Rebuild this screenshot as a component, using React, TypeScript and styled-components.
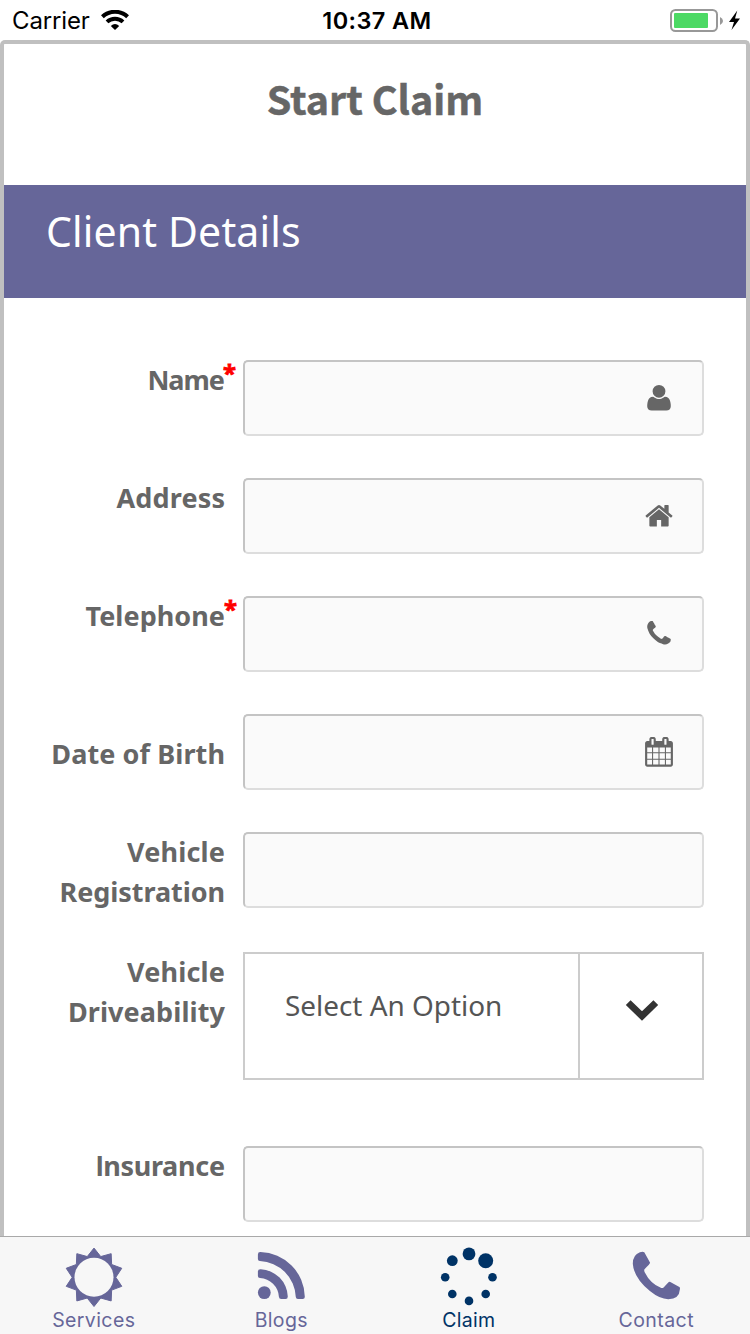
import React from "react";
import styled, { createGlobalStyle, css } from "styled-components";

const GlobalStyle = createGlobalStyle`
  * { box-sizing: border-box; }
  body { margin: 0; background: #fff; overflow: hidden; }
`;

const Screen = styled.div`
  width: 750px;
  height: 1334px;
  display: flex;
  flex-direction: column;
  overflow: hidden;
  background: #fff;
`;

const StatusBar = styled.header`
  flex: none;
  height: 40px;
  display: grid;
  grid-template-columns: 1fr auto 1fr;
  align-items: center;
  padding: 1px 9px 0 12px;
  font: 400 24px/39px Inter, "Liberation Sans", sans-serif;
  color: #000;
`;

const StatusLeft = styled.div`
  display: flex;
  align-items: center;
  gap: 11px;
`;

const StatusText = styled.span`
  letter-spacing: -0.15px;
`;

const Time = styled.span`
  padding-left: 1px;
  font-weight: 600;
  font-size: 23.5px;
  letter-spacing: 0.4px;
`;

const StatusRight = styled.div`
  display: flex;
  justify-content: flex-end;
`;

const Page = styled.main`
  flex: 1;
  min-height: 0;
  overflow: hidden;
  border: 4px solid #c0c0c0;
  border-bottom: 0;
  border-radius: 5px 5px 0 0;
`;

const Title = styled.h1`
  margin: 0;
  height: 141px;
  text-align: center;
  font: 700 39.4px/107px "Noto Sans CJK SC", sans-serif;
  -webkit-text-stroke: 0.5px #666;
  color: #666;
`;

const SectionHeading = styled.h2`
  margin: 0;
  height: 113px;
  padding-left: 42px;
  background: #666699;
  color: #fff;
  font: 400 41px/92px "Noto Sans", "Open Sans", sans-serif;
  letter-spacing: 0.15px;
`;

const Form = styled.form`
  padding: 62px 42px 0 28px;
`;

const Row = styled.div<{ $gap?: number }>`
  display: grid;
  grid-template-columns: 193px 461px;
  column-gap: 18px;
  margin-bottom: ${(p) => p.$gap ?? 42}px;
`;

const Label = styled.label<{ $offset?: number }>`
  padding-top: ${(p) => p.$offset ?? 0}px;
  height: 76px;
  text-align: right;
  font: 700 27px/40px "Noto Sans", "Open Sans", sans-serif;
  color: #666;
`;

const Line = styled.span<{ $track: number; $plainInitial?: boolean }>`
  display: block;
  white-space: nowrap;
  letter-spacing: ${(p) => p.$track}px;
  margin-right: ${(p) => -p.$track}px;
  ${(p) =>
    p.$plainInitial &&
    css`
      &::first-letter {
        font-family: Inter, "Liberation Sans", sans-serif;
        font-size: 26.5px;
      }
    `}
`;

const Required = styled.span`
  display: inline-block;
  width: 0;
  overflow: visible;
  color: #f00;
  letter-spacing: 0;
  line-height: 20px;
  vertical-align: 8px;
  font-size: 24px;
  text-indent: -1px;
  -webkit-text-stroke: 0.8px #f00;
`;

const Field = styled.div`
  height: 76px;
  display: flex;
  align-items: center;
  justify-content: flex-end;
  padding-right: 28px;
  border: 2px solid;
  border-color: #c4c4c4 #ddd #ddd #c4c4c4;
  border-radius: 5px;
  background: #fafafa;
  color: #666;
`;

const Select = styled.div`
  height: 128px;
  display: flex;
  border: 2px solid #ccc;
  color: #555;
  font: 400 27.9px/103px "Noto Sans", "Open Sans", sans-serif;
`;

const SelectValue = styled.span`
  flex: 1;
  padding-left: 40px;
`;

const SelectArrow = styled.span`
  width: 125px;
  display: flex;
  align-items: center;
  justify-content: center;
  border-left: 2px solid #ccc;
  padding-bottom: 12px;
  margin-right: -1px;
`;

const TabBar = styled.nav`
  flex: none;
  height: 98px;
  display: grid;
  grid-template-columns: repeat(4, 1fr);
  border-top: 1px solid #a9a9a9;
  background: #f7f7f7;
`;

const Tab = styled.a<{ $active?: boolean; $track: number }>`
  display: flex;
  flex-direction: column;
  align-items: center;
  padding-top: 10px;
  color: ${(p) => (p.$active ? "#003366" : "#666699")};
  font: 400 19.5px/26px Inter, "Liberation Sans", sans-serif;
  letter-spacing: ${(p) => p.$track}px;
`;

const userPath =
  "M1600 1405q0 120-73 189.5t-194 69.5h-874q-121 0-194-69.5t-73-189.5q0-53 3.5-103.5t14-109 26.5-108.5 43-97.5 62-81 85.5-53.5 111.5-20q9 0 42 21.5t74.5 48 108 48 133.5 21.5 133.5-21.5 108-48 74.5-48 42-21.5q61 0 111.5 20t85.5 53.5 62 81 43 97.5 26.5 108.5 14 109 3.5 103.5zm-320-893q0 159-112.5 271.5t-271.5 112.5-271.5-112.5-112.5-271.5 112.5-271.5 271.5-112.5 271.5 112.5 112.5 271.5z";
const homePath =
  "M1472 992v480q0 26-19 45t-45 19h-384v-384h-256v384h-384q-26 0-45-19t-19-45v-480q0-1 .5-3t.5-3l575-474 575 474q1 2 1 6zm223-69l-62 74q-8 9-21 11h-3q-13 0-21-7l-692-577-692 577q-12 8-24 7-13-2-21-11l-62-74q-8-10-7-23.5t11-21.5l719-599q32-26 76-26t76 26l244 204v-195q0-14 9-23t23-9h192q14 0 23 9t9 23v408l219 182q10 8 11 21.5t-7 23.5z";
const phonePath =
  "M1600 1240q0 27-10 70.5t-21 68.5q-21 50-122 106-94 51-186 51-27 0-53-3.5t-57.5-12.5-47-14.5-55.5-20.5-49-18q-98-35-175-83-127-79-264-216t-216-264q-48-77-83-175-3-9-18-49t-20.5-55.5-14.5-47-12.5-57.5-3.5-53q0-92 51-186 56-101 106-122 25-11 68.5-21t70.5-10q14 0 21 3 18 6 53 76 11 19 30 54t35 63.5 31 53.5q3 4 17.5 25t21.5 35.5 7 28.5q0 20-28.5 50t-62 55-62 53-28.5 46q0 9 5 22.5t8.5 20.5 14 24 11.5 19q76 137 174 235t235 174q2 1 19 11.5t24 14 20.5 8.5 22.5 5q18 0 46-28.5t53-62 55-62 50-28.5q14 0 28.5 7t35.5 21.5 25 17.5q25 15 53.5 31t63.5 35 54 30q70 35 76 53 3 7 3 21z";
const calendarPath =
  "M192 1664h288v-288h-288v288zm352 0h320v-288h-320v288zm-352-352h288v-320h-288v320zm352 0h320v-320h-320v320zm-352-384h288v-288h-288v288zm736 736h320v-288h-320v288zm-384-736h320v-288h-320v288zm768 736h288v-288h-288v288zm-384-352h320v-320h-320v320zm-352-864v-288q0-13-9.5-22.5t-22.5-9.5h-64q-13 0-22.5 9.5t-9.5 22.5v288q0 13 9.5 22.5t22.5 9.5h64q13 0 22.5-9.5t9.5-22.5zm736 864h288v-320h-288v320zm-384-384h320v-288h-320v288zm384 0h288v-288h-288v288zm32-480v-288q0-13-9.5-22.5t-22.5-9.5h-64q-13 0-22.5 9.5t-9.5 22.5v288q0 13 9.5 22.5t22.5 9.5h64q13 0 22.5-9.5t9.5-22.5zm384-64v1280q0 52-38 90t-90 38h-1408q-52 0-90-38t-38-90v-1280q0-52 38-90t90-38h128v-96q0-66 47-113t113-47h64q66 0 113 47t47 113v96h384v-96q0-66 47-113t113-47h64q66 0 113 47t47 113v96h128q52 0 90 38t38 90z";

const FieldIcon = ({ d }: { d: string }) => (
  <svg width="30" height="30" viewBox="0 15 1792 1792" fill="currentColor">
    <path d={d} />
  </svg>
);

const WifiIcon = () => (
  <svg width="28" height="21" viewBox="0 0.5 28 21" fill="none" stroke="#000">
    <path d="M1.4 7.3A18.2 18.2 0 0 1 26.6 7.3" strokeWidth="4" />
    <path d="M6 12.4A11.6 11.6 0 0 1 22 12.4" strokeWidth="3.9" />
    <path d="M9.8 16.4Q14 12.7 18.2 16.4L14 20.6Z" fill="#000" stroke="none" />
  </svg>
);

const BatteryIcon = () => (
  <svg width="71" height="24" viewBox="0 0 71 24">
    <rect x="1" y="1" width="46" height="21" rx="4.5" fill="none" stroke="#989898" strokeWidth="2" />
    <rect x="4" y="4" width="34" height="15" rx="1" fill="#4cd964" />
    <path d="M50 8Q53 9.5 53 12T50 16Z" fill="#989898" />
    <path d="M67.3 1.5L59 12.9H64L61.5 21L70 9.6H65Z" fill="#000" />
  </svg>
);

const ChevronIcon = () => (
  <svg width="34" height="22" viewBox="0 0 34 22">
    <path d="M3.2 3.6L17 17L30.8 3.6" fill="none" stroke="#333" strokeWidth="6.8" />
  </svg>
);

const sunPoints = Array.from({ length: 20 }, (_, i) => {
  const radius = i % 2 ? 21.8 : 29.2;
  const angle = (i * Math.PI) / 10;
  return `${30 + radius * Math.sin(angle)},${30 - radius * Math.cos(angle)}`;
}).join(" ");

const SunIcon = () => (
  <svg width="60" height="60" viewBox="0 -0.3 60 60">
    <polygon points={sunPoints} fill="currentColor" stroke="currentColor" strokeWidth="1" strokeLinejoin="round" />
    <circle cx="30" cy="30" r="19.5" fill="#f7f7f7" />
  </svg>
);

const FeedIcon = () => (
  <svg width="60" height="60" viewBox="-0.4 -0.3 60 60" fill="currentColor">
    <circle cx="12.9" cy="45.3" r="6.4" />
    <path d="M6.5 24.1Q6.5 21.7 9.4 21.9A28.5 28.5 0 0 1 36.4 49.2Q36.4 51.7 34.2 51.7H29.8Q27.7 51.7 27.5 49.5A20 20 0 0 0 8.6 30.8Q6.5 30.6 6.5 28.6Z" />
    <path d="M6.5 7.1Q6.5 4.7 9 4.8A45.5 45.5 0 0 1 53.4 49.4Q53.5 51.7 51.2 51.7H46.6Q44.5 51.7 44.4 49.6A37.2 37.2 0 0 0 8.5 13.8Q6.5 13.7 6.5 11.7Z" />
  </svg>
);

const dots = [
  [30, 6.6, 6.4],
  [46.7, 13.5, 7.5],
  [53.5, 30, 4.3],
  [46.7, 46.7, 4.3],
  [30, 53.6, 4.3],
  [13.3, 46.7, 4.3],
  [6.2, 30, 4.3],
  [13.3, 13.4, 5.4],
];

const SpinnerIcon = () => (
  <svg width="60" height="60" viewBox="0 -0.3 60 60" fill="currentColor">
    {dots.map(([cx, cy, r], i) => (
      <circle key={i} cx={cx} cy={cy} r={r} />
    ))}
  </svg>
);

const PhoneIcon = () => (
  <svg width="60" height="60" viewBox="-0.4 -0.3 60 60" fill="currentColor">
    <path d="M13.5 5Q16.5 4.1 17.9 4.9L23.7 15.5Q23.8 16.5 17.9 22.1Q17.6 23.4 18.3 24.9Q24 36.5 34.9 40.7Q36.2 41 37.2 40.2L42.1 34.9Q42.8 34.2 43.9 34.7L53 39.7Q53.8 40.3 53.5 42Q52.9 51.8 42 51.9Q33.5 52 23.5 43.8Q7.4 30.5 6.4 16.5Q6.4 7.5 13.5 5Z" />
  </svg>
);

interface RowData {
  lines: [string, number][];
  required?: boolean;
  plainInitial?: boolean;
  icon?: string;
  offset?: number;
  gap?: number;
  select?: boolean;
}

const rows: RowData[] = [
  { lines: [["Name", -1]], required: true, icon: userPath },
  { lines: [["Address", 0.15]], icon: homePath },
  { lines: [["Telephone", 0.05]], required: true, icon: phonePath },
  { lines: [["Date of Birth", 0.1]], icon: calendarPath, offset: 20 },
  { lines: [["Vehicle", 0.2], ["Registration", -0.07]], gap: 44 },
  { lines: [["Vehicle", 0.2], ["Driveability", 0.1]], select: true, gap: 66 },
  { lines: [["Insurance", -0.3]], plainInitial: true },
];

export default function App() {
  return (
    <Screen>
      <GlobalStyle />
      <StatusBar>
        <StatusLeft>
          <StatusText>Carrier</StatusText>
          <WifiIcon />
        </StatusLeft>
        <Time>10:37 AM</Time>
        <StatusRight>
          <BatteryIcon />
        </StatusRight>
      </StatusBar>
      <Page>
        <Title>Start Claim</Title>
        <SectionHeading>Client Details</SectionHeading>
        <Form>
          {rows.map((row, i) => (
            <Row key={i} $gap={row.gap}>
              <Label $offset={row.offset}>
                {row.lines.map(([text, track]) => (
                  <Line key={text} $track={track} $plainInitial={row.plainInitial}>
                    {text}
                    {row.required && <Required>*</Required>}
                  </Line>
                ))}
              </Label>
              {row.select ? (
                <Select>
                  <SelectValue>Select An Option</SelectValue>
                  <SelectArrow>
                    <ChevronIcon />
                  </SelectArrow>
                </Select>
              ) : (
                <Field>{row.icon && <FieldIcon d={row.icon} />}</Field>
              )}
            </Row>
          ))}
        </Form>
      </Page>
      <TabBar>
        <Tab $track={0.4}>
          <SunIcon />
          Services
        </Tab>
        <Tab $track={0.35}>
          <FeedIcon />
          Blogs
        </Tab>
        <Tab $active $track={0.3}>
          <SpinnerIcon />
          Claim
        </Tab>
        <Tab $track={0.45}>
          <PhoneIcon />
          Contact
        </Tab>
      </TabBar>
    </Screen>
  );
}
